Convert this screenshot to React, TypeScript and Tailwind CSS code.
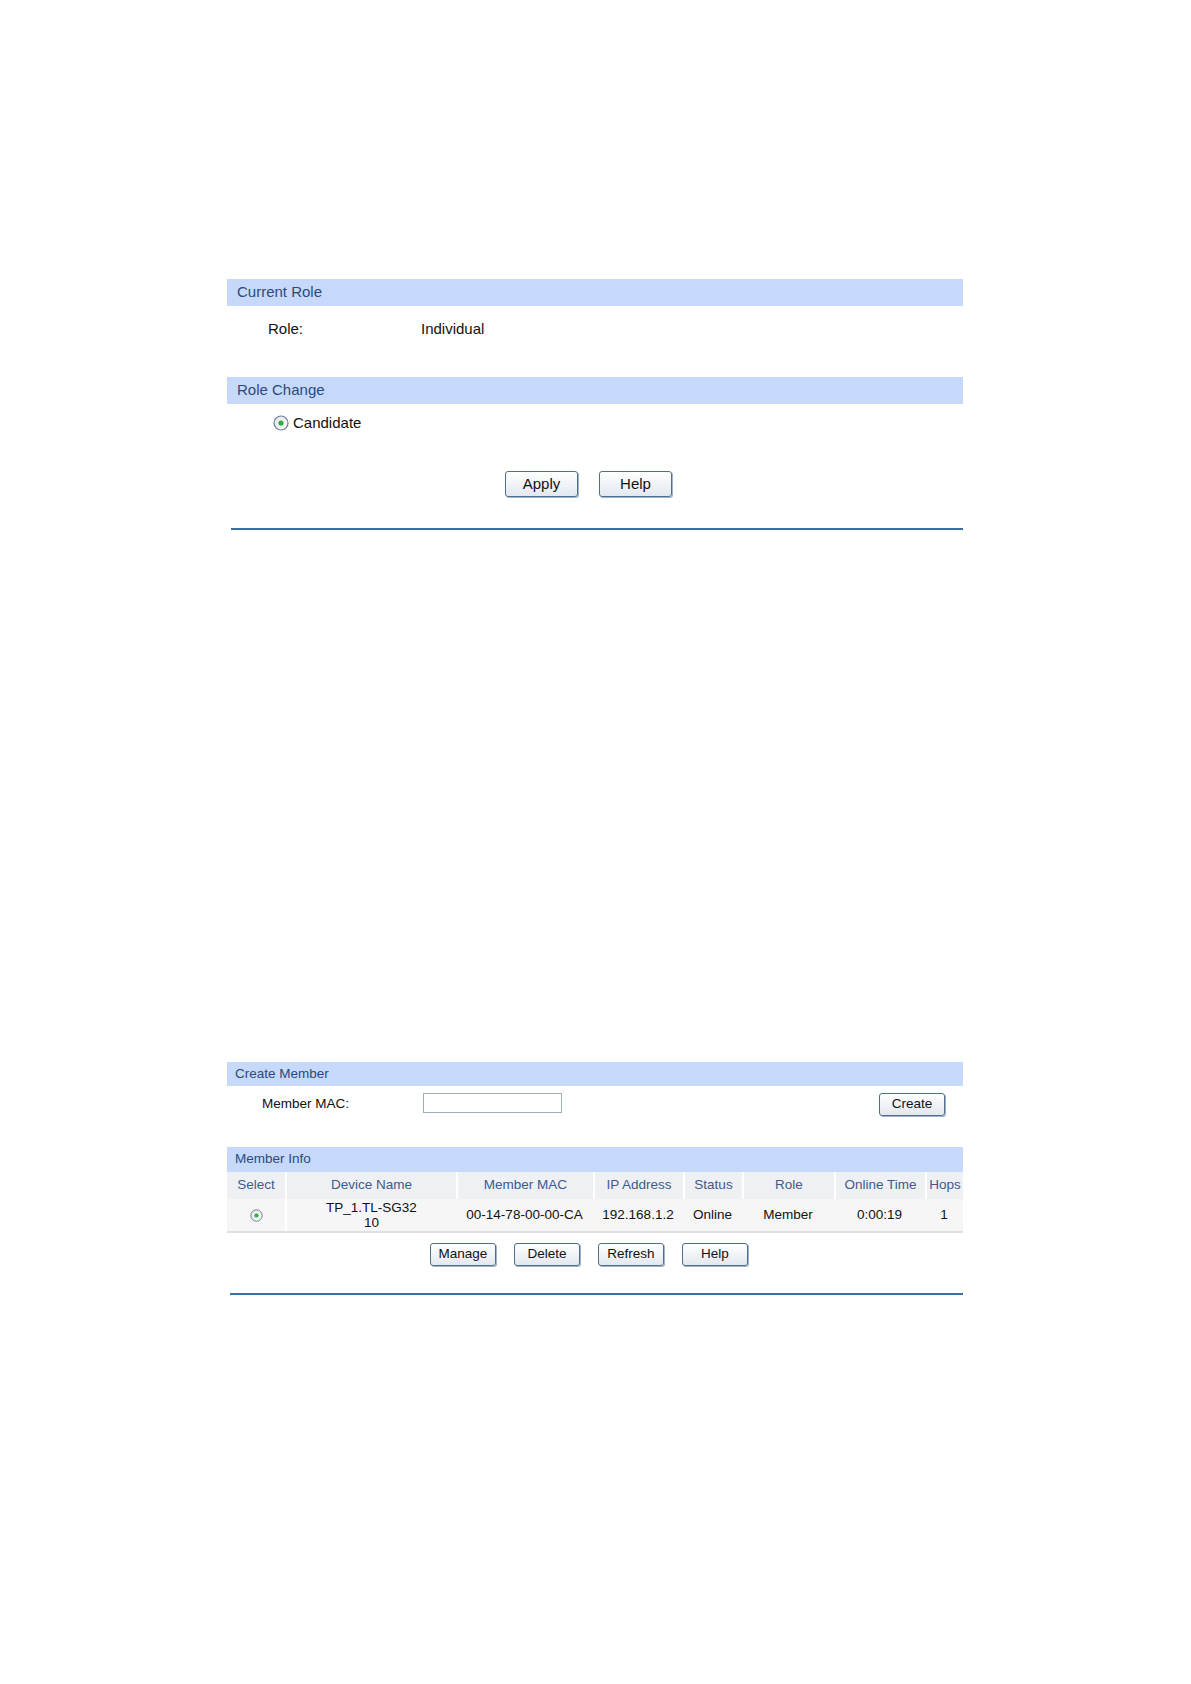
import React from 'react';

const font = { fontFamily: '"Liberation Sans", Arial, sans-serif' };

function Radio({ size = 16 }: { size?: number }) {
  return (
    <svg width={size} height={size} viewBox="0 0 16 16" className="shrink-0">
      <defs>
        <linearGradient id="rg" x1="0" y1="0" x2="1" y2="1">
          <stop offset="0" stopColor="#dfe3ea" />
          <stop offset="1" stopColor="#ffffff" />
        </linearGradient>
      </defs>
      <circle cx="8" cy="8" r="7" fill="url(#rg)" stroke="#6f7d8f" strokeWidth="1.2" />
      <circle cx="8" cy="8" r="2.6" fill="#2fae3c" />
    </svg>
  );
}

function Btn({ label, w, h = 'h-[26px]', text = 'text-[15px]' }: { label: string; w: string; h?: string; text?: string }) {
  return (
    <button
      className={`${w} ${h} ${text} flex items-center justify-center rounded-[3px] border border-[#4f6f8f] bg-gradient-to-b from-white to-[#e3e8ef] text-[#111] shadow-[1px_1px_0_#9fb2c6]`}
    >
      {label}
    </button>
  );
}

function SectionBar({ title, h, text, pl = 'pl-[10px]' }: { title: string; h: string; text: string; pl?: string }) {
  return (
    <div className={`${h} ${text} ${pl} flex items-center bg-[#c6d9fb] text-[#2b4a7c]`}>{title}</div>
  );
}

const cols = [
  { name: 'Select', w: 'w-[58px]' },
  { name: 'Device Name', w: 'w-[171px]' },
  { name: 'Member MAC', w: 'w-[137px]' },
  { name: 'IP Address', w: 'w-[90px]' },
  { name: 'Status', w: 'w-[59px]' },
  { name: 'Role', w: 'w-[92px]' },
  { name: 'Online Time', w: 'w-[91px]' },
  { name: 'Hops', w: 'w-[38px]' },
];

export default function App() {
  return (
    <div className="min-h-[1684px] w-[1191px] bg-white" style={font}>
      {/* Role panel */}
      <div className="ml-[227px] w-[736px] pt-[279px]">
        <SectionBar title="Current Role" h="h-[27px]" text="text-[15px]" />
        <div className="flex h-[71px] pt-[12px] text-[15px] text-[#111]">
          <span className="w-[194px] pl-[41px]">Role:</span>
          <span>Individual</span>
        </div>
        <SectionBar title="Role Change" h="h-[27px]" text="text-[15px]" />
        <div className="flex h-[36px] items-center gap-[4px] pl-[46px] pt-[2px] text-[15px] text-[#111]">
          <Radio />
          <span>Candidate</span>
        </div>
        <div className="flex gap-[21px] pl-[278px] pt-[31px]">
          <Btn label="Apply" w="w-[73px]" />
          <Btn label="Help" w="w-[73px]" />
        </div>
        <div className="ml-[4px] mt-[31px] h-[2px] w-[732px] bg-[#3c6e9e]" />
      </div>

      {/* Member panel */}
      <div className="ml-[227px] mt-[532px] w-[736px]">
        <SectionBar title="Create Member" h="h-[24px]" text="text-[13.5px]" pl="pl-[8px]" />
        <div className="flex h-[61px] items-start pt-[6px] text-[13.5px] text-[#111]">
          <span className="mt-[2px] w-[196px] pl-[35px]">Member MAC:</span>
          <div className="mt-[1px] h-[20px] w-[139px] border border-[#a3acb9] bg-white" />
          <div className="ml-auto mr-[18px] mt-[1px]">
            <Btn label="Create" w="w-[66px]" h="h-[23px]" text="text-[13.5px]" />
          </div>
        </div>
        <SectionBar title="Member Info" h="h-[25px]" text="text-[13.5px]" pl="pl-[8px]" />
        <div className="flex h-[27px] bg-[#eef0f3] text-[13.5px] text-[#3d5b8c]">
          {cols.map((c, i) => (
            <div
              key={c.name}
              className={`${c.w} flex items-center justify-center ${i > 0 ? 'border-l-2 border-white' : ''}`}
            >
              {c.name}
            </div>
          ))}
        </div>
        <div className="flex h-[34px] border-b-2 border-[#dde0e4] bg-[#f6f6f7] text-[13.5px] text-[#111]">
          <div className="flex w-[58px] items-center justify-center">
            <Radio size={13} />
          </div>
          <div className="flex w-[171px] flex-col items-center justify-center border-l-2 border-white leading-[15px]">
            <span>TP_1.TL-SG32</span>
            <span>10</span>
          </div>
          {['00-14-78-00-00-CA', '192.168.1.2', 'Online', 'Member', '0:00:19', '1'].map((v, i) => (
            <div key={i} className={`${cols[i + 2].w} flex items-center justify-center`}>
              {v}
            </div>
          ))}
        </div>
        <div className="flex gap-[18px] pl-[203px] pt-[10px]">
          <Btn label="Manage" w="w-[66px]" h="h-[23px]" text="text-[13.5px]" />
          <Btn label="Delete" w="w-[66px]" h="h-[23px]" text="text-[13.5px]" />
          <Btn label="Refresh" w="w-[66px]" h="h-[23px]" text="text-[13.5px]" />
          <Btn label="Help" w="w-[66px]" h="h-[23px]" text="text-[13.5px]" />
        </div>
        <div className="ml-[3px] mt-[27px] h-[2px] w-[733px] bg-[#3c6e9e]" />
      </div>
    </div>
  );
}
